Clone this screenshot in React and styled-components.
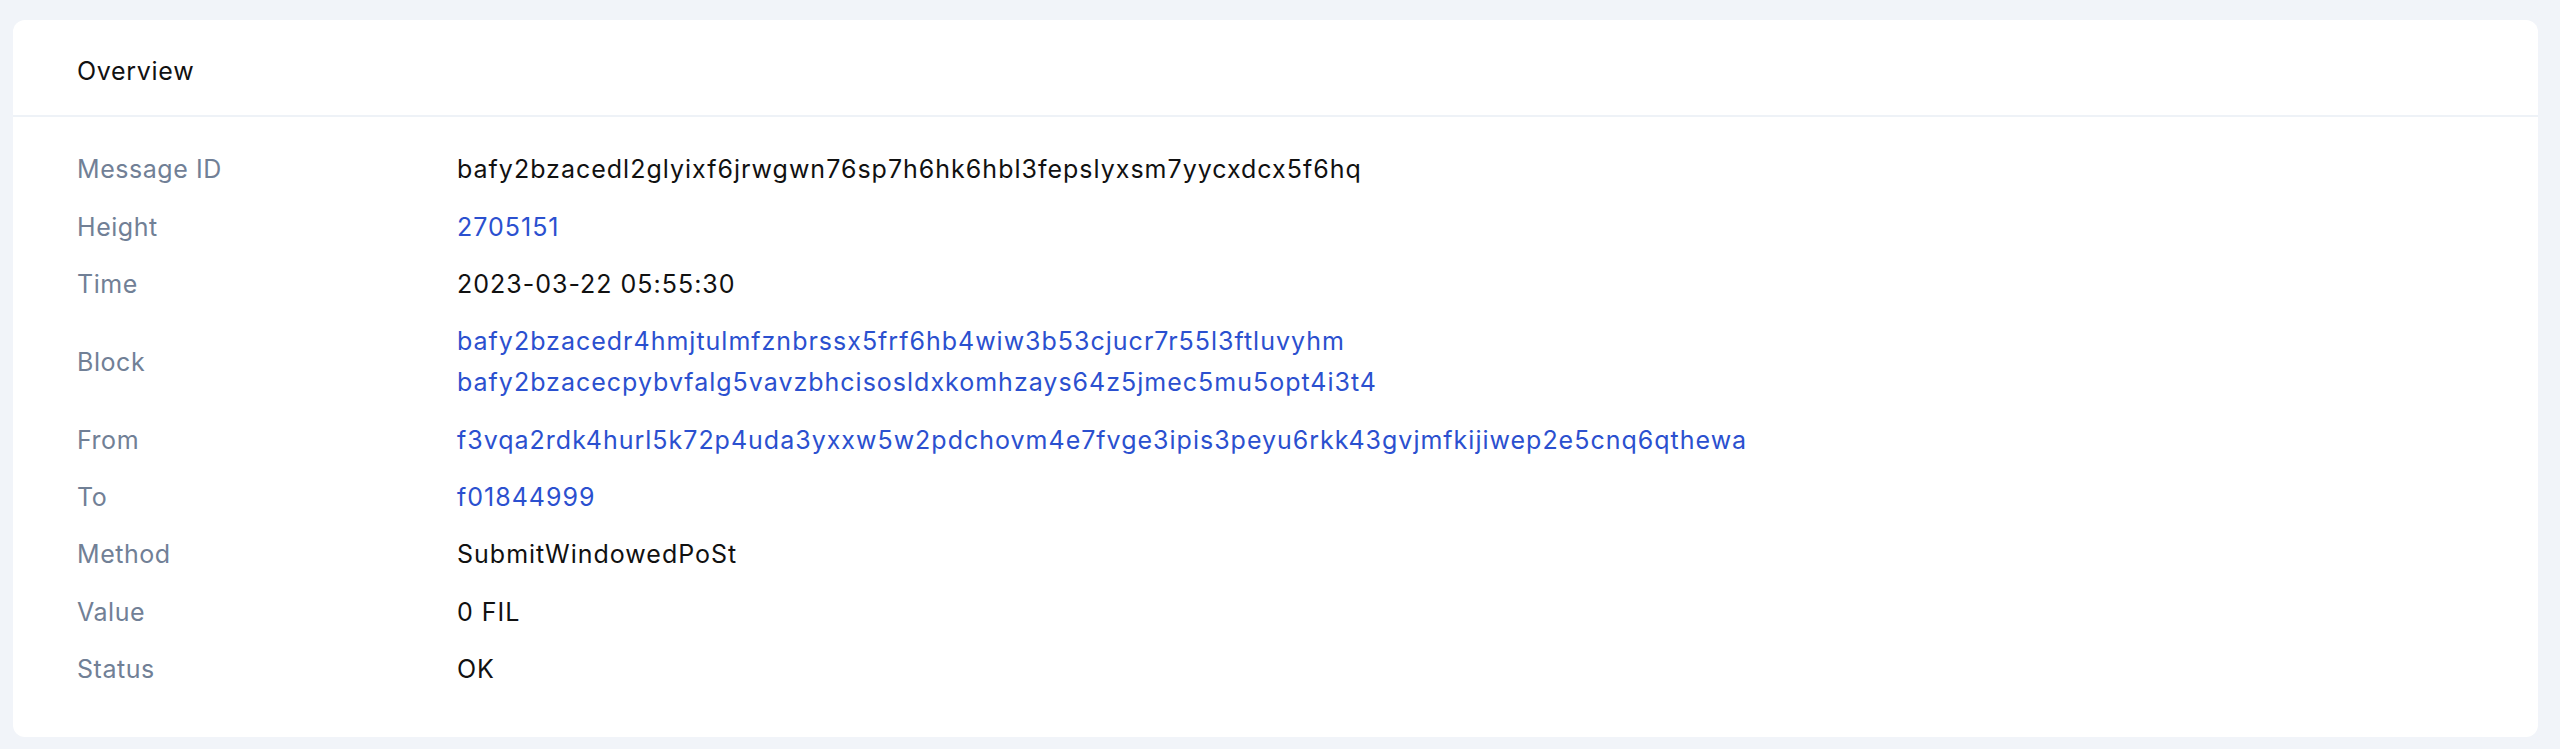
import styled, { createGlobalStyle } from 'styled-components'

const GlobalStyle = createGlobalStyle`
  body {
    margin: 0;
    background-color: #f1f4f9;
    font-family: Inter, "Liberation Sans", Arial, sans-serif;
    -webkit-font-smoothing: antialiased;
  }
`

const Page = styled.div`
  padding: 20px 22px 12px 13px;
`

const Card = styled.section`
  background-color: #ffffff;
  border-radius: 12px;
  min-height: 717px;
  box-sizing: border-box;
`

const Header = styled.header`
  border-bottom: 2px solid #eef2f7;
  color: #111111;
  font-size: 25px;
  letter-spacing: 0.7px;
  height: 97px;
  line-height: 103px;
  padding-left: 64px;
  box-sizing: border-box;
`

const Body = styled.div`
  display: flex;
  flex-direction: column;
  padding: 24px 64px 36px;
`

const Row = styled.div`
  align-items: center;
  display: flex;
  font-size: 25px;
  letter-spacing: 1px;
  line-height: 41px;
  padding: 8.2px 0;
`

const Label = styled.div`
  color: #718096;
  flex: 0 0 380px;
  letter-spacing: 0.55px;
`

const Value = styled.div`
  color: ${p => (p.link ? '#2b50cf' : '#111111')};
  display: flex;
  flex-direction: column;
`

const rows = [
  { label: 'Message ID', values: ['bafy2bzacedl2glyixf6jrwgwn76sp7h6hk6hbl3fepslyxsm7yycxdcx5f6hq'] },
  { label: 'Height', values: ['2705151'], link: true },
  { label: 'Time', values: ['2023-03-22 05:55:30'] },
  {
    label: 'Block',
    values: [
      'bafy2bzacedr4hmjtulmfznbrssx5frf6hb4wiw3b53cjucr7r55l3ftluvyhm',
      'bafy2bzacecpybvfalg5vavzbhcisosldxkomhzays64z5jmec5mu5opt4i3t4',
    ],
    link: true,
  },
  { label: 'From', values: ['f3vqa2rdk4hurl5k72p4uda3yxxw5w2pdchovm4e7fvge3ipis3peyu6rkk43gvjmfkijiwep2e5cnq6qthewa'], link: true },
  { label: 'To', values: ['f01844999'], link: true },
  { label: 'Method', values: ['SubmitWindowedPoSt'] },
  { label: 'Value', values: ['0 FIL'] },
  { label: 'Status', values: ['OK'] },
]

const App = () => (
  <>
    <GlobalStyle />
    <Page>
      <Card>
        <Header>Overview</Header>
        <Body>
          {rows.map(({ label, values, link }) => (
            <Row key={label}>
              <Label>{label}</Label>
              <Value link={link}>
                {values.map(v => (
                  <span key={v}>{v}</span>
                ))}
              </Value>
            </Row>
          ))}
        </Body>
      </Card>
    </Page>
  </>
)

export default App
